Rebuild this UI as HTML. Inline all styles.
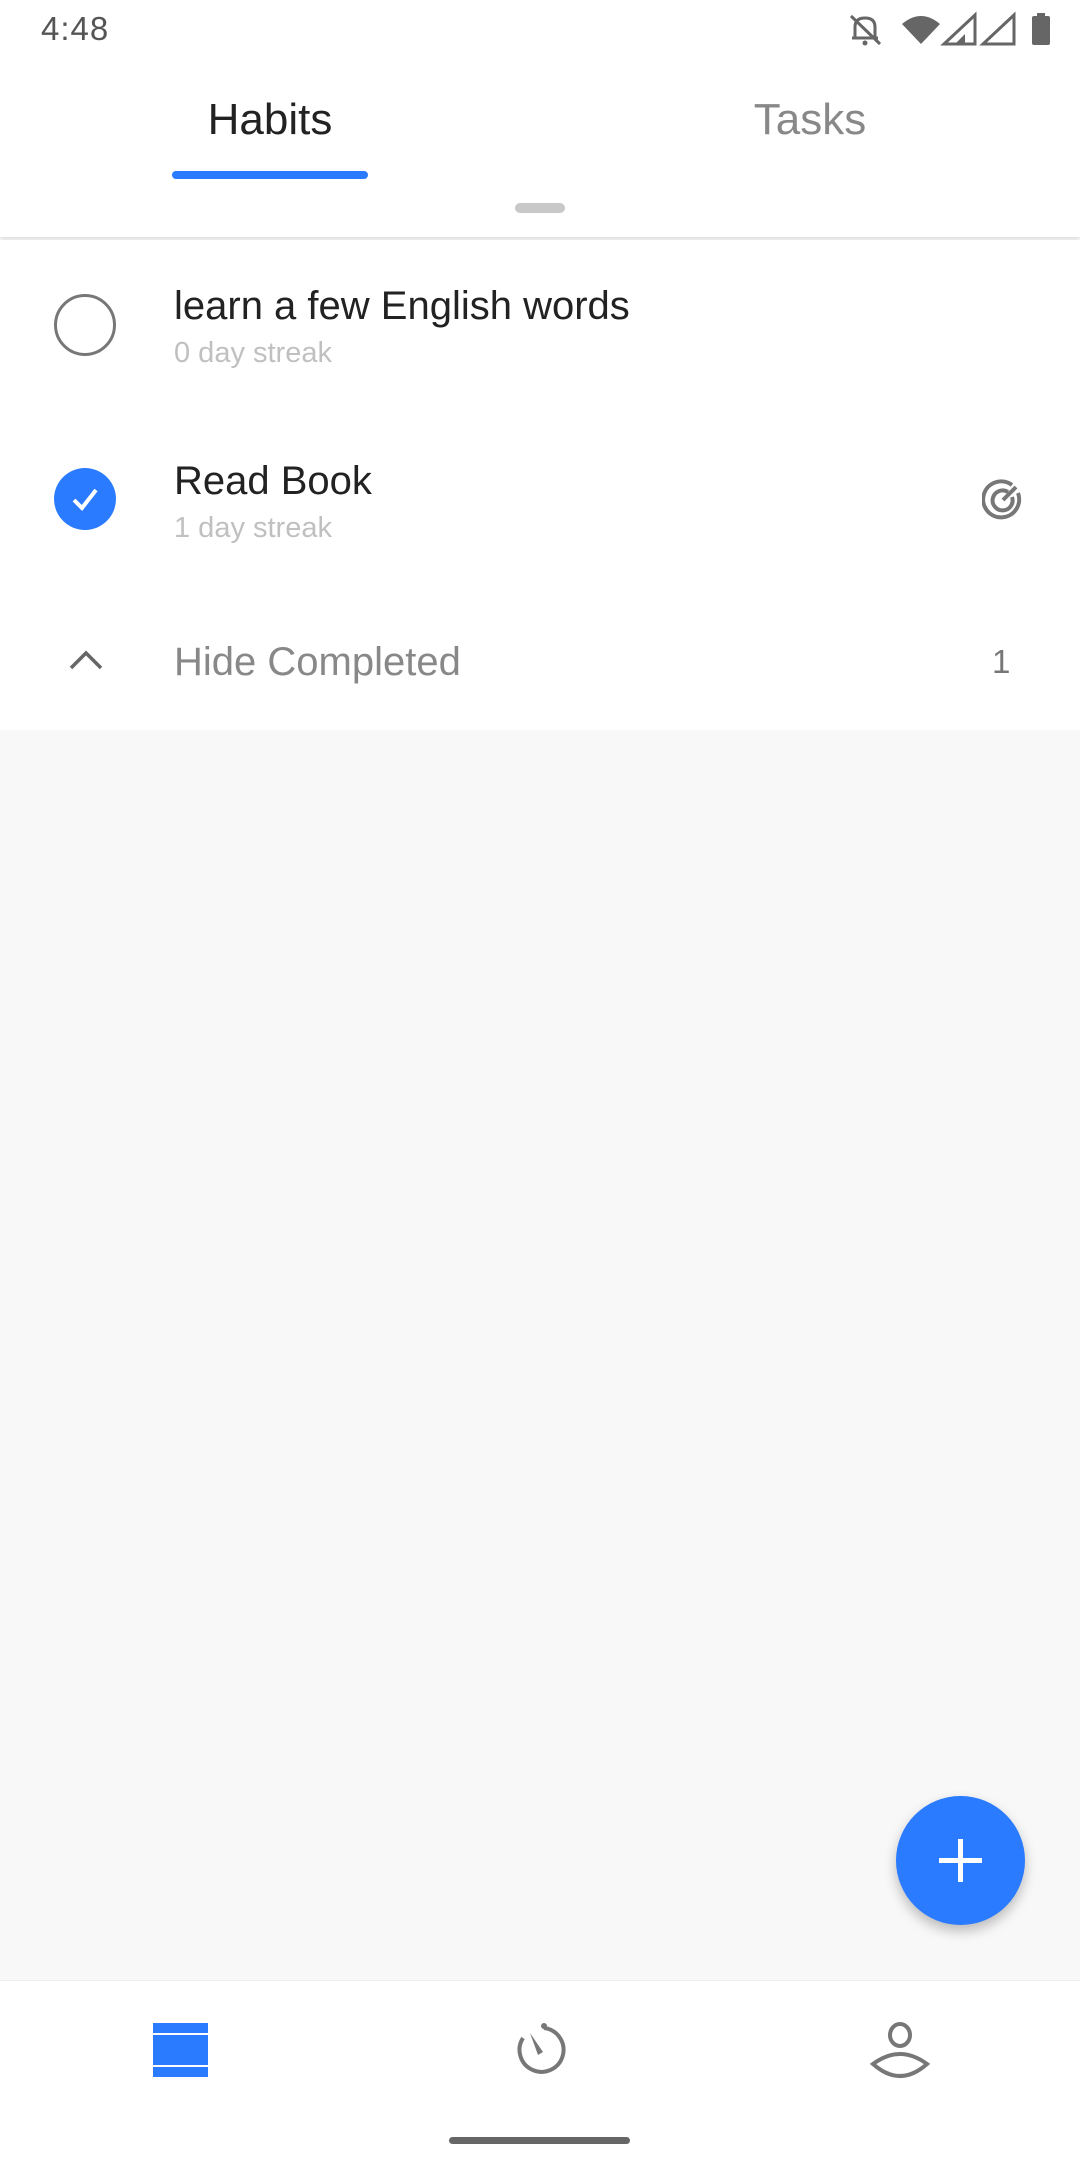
<!DOCTYPE html>
<html><head><meta charset="utf-8"><style>
*{margin:0;padding:0;box-sizing:border-box}
body{width:1080px;height:2160px;background:#f8f8f8;font-family:"Liberation Sans",sans-serif;position:relative;overflow:hidden}
.abs{position:absolute}
.t{white-space:nowrap}
</style></head><body>
<div class="abs" style="left:0;top:0;width:1080px;height:237px;background:#fff;box-shadow:0 2px 5px rgba(0,0,0,0.12)"></div>
<div class="abs t" style="left:41px;top:10px;font-size:33px;color:#555;letter-spacing:1px">4:48</div>
<svg class="abs" style="left:830px;top:10px" width="220" height="40" viewBox="820 10 220 40">
<g fill="#666" stroke="#666">
<path d="M845 38 L845 27 Q845 18 855 18 Q865 18 865 27 L865 38 Z" fill="none" stroke-width="3"/>
<line x1="841" y1="16" x2="870" y2="44" stroke-width="3"/>
<line x1="842" y1="38" x2="868" y2="38" stroke-width="3"/>
<circle cx="855" cy="43" r="2.5" stroke="none"/>
<path d="M892 24 Q911 8 930 24 L911 44 Z" stroke="none"/>
<path d="M965 15 L965 44 L934 44 Z" fill="none" stroke-width="3"/>
<path d="M945 44 L955 34 L955 44 Z" stroke="none"/>
<path d="M1004 15 L1004 44 L973 44 Z" fill="none" stroke-width="3"/>
<rect x="1022" y="16" width="18" height="29" rx="2" stroke="none"/>
<rect x="1027" y="13" width="8" height="4" stroke="none"/>
</g></svg>
<div class="abs t" style="left:170px;top:95px;width:200px;text-align:center;font-size:44px;color:#222">Habits</div>
<div class="abs t" style="left:710px;top:95px;width:200px;text-align:center;font-size:44px;color:#888">Tasks</div>
<div class="abs" style="left:172px;top:171px;width:196px;height:8px;border-radius:4px;background:#2a7bff"></div>
<div class="abs" style="left:515px;top:203px;width:50px;height:10px;border-radius:5px;background:#c8c8c8"></div>
<div class="abs" style="left:0;top:240px;width:1080px;height:490px;background:#fff"></div>
<div class="abs" style="left:54px;top:294px;width:62px;height:62px;border-radius:50%;border:3px solid #777"></div>
<div class="abs t" style="left:174px;top:284px;font-size:40px;color:#222">learn a few English words</div>
<div class="abs t" style="left:174px;top:337px;font-size:29px;color:#c0c0c0">0 day streak</div>
<div class="abs" style="left:54px;top:468px;width:62px;height:62px;border-radius:50%;background:#2a7bff"></div>
<svg class="abs" style="left:54px;top:468px" width="62" height="62"><path d="M20 32 L28 40 L42 22" fill="none" stroke="#fff" stroke-width="4"/></svg>
<div class="abs t" style="left:174px;top:459px;font-size:40px;color:#222">Read Book</div>
<div class="abs t" style="left:174px;top:512px;font-size:29px;color:#c0c0c0">1 day streak</div>
<svg class="abs" style="left:982px;top:479px" width="42" height="42" viewBox="0 0 42 42"><g fill="none" stroke="#777" stroke-width="4"><path d="M30 6 A18 18 0 1 0 36 14"/><path d="M26 13 A10 10 0 1 0 30 18"/><line x1="21" y1="21" x2="34" y2="8"/></g></svg>
<svg class="abs" style="left:68px;top:648px" width="36" height="24"><path d="M3 20 L18 5 L33 20" fill="none" stroke="#666" stroke-width="3.5"/></svg>
<div class="abs t" style="left:174px;top:640px;font-size:40px;color:#888">Hide Completed</div>
<div class="abs t" style="left:992px;top:643px;font-size:33px;color:#777">1</div>
<div class="abs" style="left:896px;top:1796px;width:129px;height:129px;border-radius:50%;background:#2a7bff;box-shadow:0 6px 12px rgba(0,0,0,0.25)"></div>
<div class="abs" style="left:958px;top:1839px;width:5px;height:43px;background:#fff"></div>
<div class="abs" style="left:939px;top:1858px;width:43px;height:5px;background:#fff"></div>
<div class="abs" style="left:0;top:1980px;width:1080px;height:180px;background:#fff;border-top:1px solid #eee"></div>
<div class="abs" style="left:153px;top:2023px;width:55px;height:10px;background:#2a7bff"></div>
<div class="abs" style="left:153px;top:2035px;width:55px;height:30px;background:#2a7bff"></div>
<div class="abs" style="left:153px;top:2067px;width:55px;height:10px;background:#2a7bff"></div>
<svg class="abs" style="left:510px;top:2020px" width="60" height="60" viewBox="0 0 60 60"><g fill="none" stroke="#777" stroke-width="4"><path d="M34 8 A22 22 0 1 1 13 18"/></g><path d="M20 13 L33 32 L28 35 Z" fill="#777"/><circle cx="34" cy="6" r="3" fill="#777"/></svg>
<svg class="abs" style="left:868px;top:2020px" width="64" height="60" viewBox="0 0 64 60"><g fill="none" stroke="#777" stroke-width="4"><ellipse cx="32" cy="15" rx="10" ry="11"/><path d="M5 44 Q32 24 59 44 Q32 68 5 44 Z"/></g></svg>
<div class="abs" style="left:449px;top:2137px;width:181px;height:7px;border-radius:4px;background:#666"></div>
</body></html>
